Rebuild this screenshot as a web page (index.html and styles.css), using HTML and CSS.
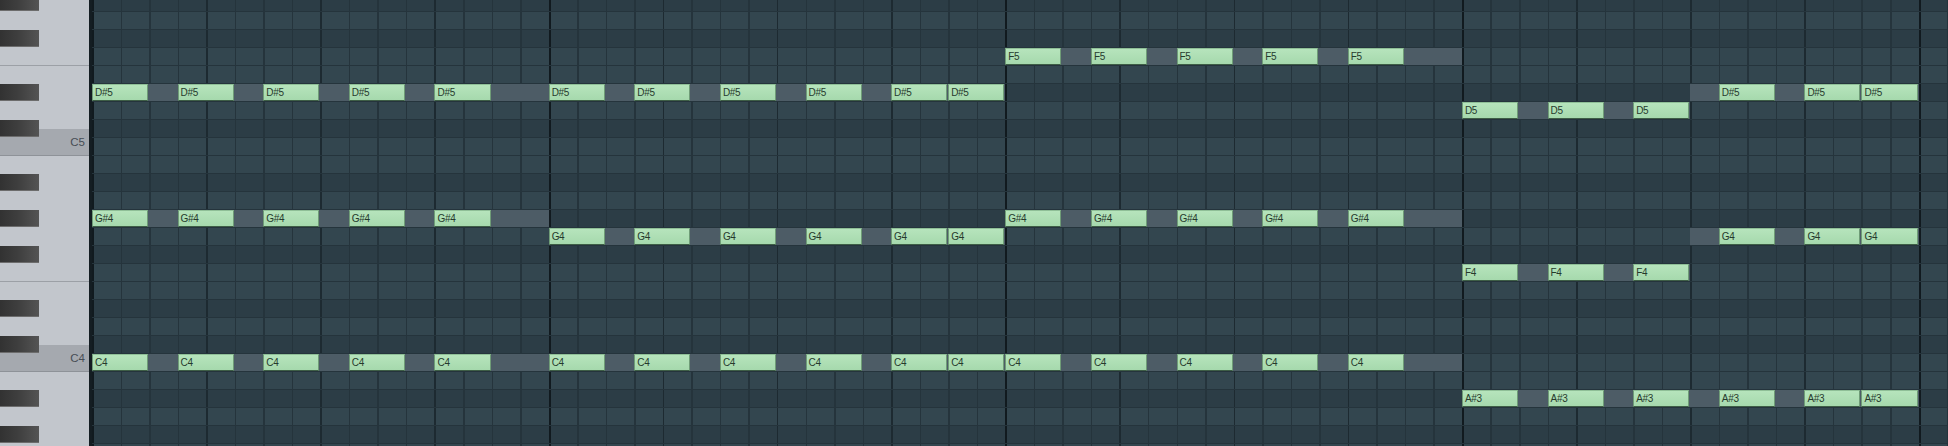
FILE: index.html
```html
<!DOCTYPE html>
<html>
<head>
<meta charset="utf-8">
<title>Piano roll</title>
<link rel="stylesheet" href="styles.css">
</head>
<body>
<div class="roll">
  <div class="piano">
    <div class="key top black"><div class="bk"></div></div>
    <div class="key white"></div>
    <div class="key black"><div class="bk"></div></div>
    <div class="key white fkey"></div>
    <div class="key white"></div>
    <div class="key black"><div class="bk"></div></div>
    <div class="key white"></div>
    <div class="key black csharp"><div class="bk"></div></div>
    <div class="key white ckey"><span class="label">C5</span></div>
    <div class="key white"></div>
    <div class="key black"><div class="bk"></div></div>
    <div class="key white"></div>
    <div class="key black"><div class="bk"></div></div>
    <div class="key white"></div>
    <div class="key black"><div class="bk"></div></div>
    <div class="key white fkey"></div>
    <div class="key white"></div>
    <div class="key black"><div class="bk"></div></div>
    <div class="key white"></div>
    <div class="key black csharp"><div class="bk"></div></div>
    <div class="key white ckey"><span class="label">C4</span></div>
    <div class="key white"></div>
    <div class="key black"><div class="bk"></div></div>
    <div class="key white"></div>
    <div class="key black"><div class="bk"></div></div>
    <div class="key white"></div>
  </div>
  <div class="divider"></div>
  <div class="grid">
    <!-- G#5 -->
    <div class="row top b"></div>
    <!-- G5 -->
    <div class="row w"></div>
    <!-- F#5 -->
    <div class="row b"></div>
    <!-- F5 -->
    <div class="row w">
      <div class="ghost" style="--s:32;--len:16"></div>
      <div class="note" style="--s:32">F5</div>
      <div class="note" style="--s:35">F5</div>
      <div class="note" style="--s:38">F5</div>
      <div class="note" style="--s:41">F5</div>
      <div class="note" style="--s:44">F5</div>
    </div>
    <!-- E5 -->
    <div class="row w"></div>
    <!-- D#5 -->
    <div class="row b">
      <div class="ghost" style="--s:0;--len:32"></div>
      <div class="ghost" style="--s:56;--len:8"></div>
      <div class="note" style="--s:0">D#5</div>
      <div class="note" style="--s:3">D#5</div>
      <div class="note" style="--s:6">D#5</div>
      <div class="note" style="--s:9">D#5</div>
      <div class="note" style="--s:12">D#5</div>
      <div class="note" style="--s:16">D#5</div>
      <div class="note" style="--s:19">D#5</div>
      <div class="note" style="--s:22">D#5</div>
      <div class="note" style="--s:25">D#5</div>
      <div class="note" style="--s:28">D#5</div>
      <div class="note" style="--s:30">D#5</div>
      <div class="note" style="--s:57">D#5</div>
      <div class="note" style="--s:60">D#5</div>
      <div class="note" style="--s:62">D#5</div>
    </div>
    <!-- D5 -->
    <div class="row w">
      <div class="ghost" style="--s:48;--len:8"></div>
      <div class="note" style="--s:48">D5</div>
      <div class="note" style="--s:51">D5</div>
      <div class="note" style="--s:54">D5</div>
    </div>
    <!-- C#5 -->
    <div class="row b"></div>
    <!-- C5 -->
    <div class="row w"></div>
    <!-- B4 -->
    <div class="row w"></div>
    <!-- A#4 -->
    <div class="row b"></div>
    <!-- A4 -->
    <div class="row w"></div>
    <!-- G#4 -->
    <div class="row b">
      <div class="ghost" style="--s:0;--len:16"></div>
      <div class="ghost" style="--s:32;--len:16"></div>
      <div class="note" style="--s:0">G#4</div>
      <div class="note" style="--s:3">G#4</div>
      <div class="note" style="--s:6">G#4</div>
      <div class="note" style="--s:9">G#4</div>
      <div class="note" style="--s:12">G#4</div>
      <div class="note" style="--s:32">G#4</div>
      <div class="note" style="--s:35">G#4</div>
      <div class="note" style="--s:38">G#4</div>
      <div class="note" style="--s:41">G#4</div>
      <div class="note" style="--s:44">G#4</div>
    </div>
    <!-- G4 -->
    <div class="row w">
      <div class="ghost" style="--s:16;--len:16"></div>
      <div class="ghost" style="--s:56;--len:8"></div>
      <div class="note" style="--s:16">G4</div>
      <div class="note" style="--s:19">G4</div>
      <div class="note" style="--s:22">G4</div>
      <div class="note" style="--s:25">G4</div>
      <div class="note" style="--s:28">G4</div>
      <div class="note" style="--s:30">G4</div>
      <div class="note" style="--s:57">G4</div>
      <div class="note" style="--s:60">G4</div>
      <div class="note" style="--s:62">G4</div>
    </div>
    <!-- F#4 -->
    <div class="row b"></div>
    <!-- F4 -->
    <div class="row w">
      <div class="ghost" style="--s:48;--len:8"></div>
      <div class="note" style="--s:48">F4</div>
      <div class="note" style="--s:51">F4</div>
      <div class="note" style="--s:54">F4</div>
    </div>
    <!-- E4 -->
    <div class="row w"></div>
    <!-- D#4 -->
    <div class="row b"></div>
    <!-- D4 -->
    <div class="row w"></div>
    <!-- C#4 -->
    <div class="row b"></div>
    <!-- C4 -->
    <div class="row w">
      <div class="ghost" style="--s:0;--len:48"></div>
      <div class="note" style="--s:0">C4</div>
      <div class="note" style="--s:3">C4</div>
      <div class="note" style="--s:6">C4</div>
      <div class="note" style="--s:9">C4</div>
      <div class="note" style="--s:12">C4</div>
      <div class="note" style="--s:16">C4</div>
      <div class="note" style="--s:19">C4</div>
      <div class="note" style="--s:22">C4</div>
      <div class="note" style="--s:25">C4</div>
      <div class="note" style="--s:28">C4</div>
      <div class="note" style="--s:30">C4</div>
      <div class="note" style="--s:32">C4</div>
      <div class="note" style="--s:35">C4</div>
      <div class="note" style="--s:38">C4</div>
      <div class="note" style="--s:41">C4</div>
      <div class="note" style="--s:44">C4</div>
    </div>
    <!-- B3 -->
    <div class="row w"></div>
    <!-- A#3 -->
    <div class="row b">
      <div class="ghost" style="--s:48;--len:16"></div>
      <div class="note" style="--s:48">A#3</div>
      <div class="note" style="--s:51">A#3</div>
      <div class="note" style="--s:54">A#3</div>
      <div class="note" style="--s:57">A#3</div>
      <div class="note" style="--s:60">A#3</div>
      <div class="note" style="--s:62">A#3</div>
    </div>
    <!-- A3 -->
    <div class="row w"></div>
    <!-- G#3 -->
    <div class="row b"></div>
    <!-- G3 -->
    <div class="row w"></div>
  </div>
</div>
</body>
</html>
```

FILE: styles.css
```css
:root {
  --step: 28.54px;
  --bar: calc(var(--step) * 16);
  --beat: calc(var(--step) * 4);
}

html, body {
  margin: 0;
  padding: 0;
  background: #2c3d46;
  overflow: hidden;
}

.roll {
  display: flex;
  width: 1948px;
  height: 446px;
  overflow: hidden;
  font-family: "Liberation Sans", Arial, sans-serif;
}

/* ---------- piano keyboard ---------- */
.piano {
  width: 89px;
  flex: none;
  display: flex;
  flex-direction: column;
  background: #c2c6cc;
}

.key {
  height: 18px;
  flex: none;
  box-sizing: border-box;
  display: flex;
  align-items: flex-start;
}

.key.top {
  height: 12px;
}

.bk {
  width: 39px;
  height: calc(100% - 1px);
  background: linear-gradient(to right, #323232 0%, #3e3e3e 45%, #545454 100%);
  box-shadow: inset 0 -1px 0 #6c6c6c;
}

.fkey {
  border-bottom: 1px solid #9ca0a6;
}

.csharp {
  background: linear-gradient(to bottom, #c2c6cc 50%, #a5a9af 50%);
}

.ckey {
  background: #a5a9af;
  border-bottom: 1px solid #8e9298;
  justify-content: flex-end;
}

.label {
  font-size: 11.5px;
  line-height: 9px;
  color: #474d55;
  padding-right: 4px;
}

.divider {
  width: 3px;
  flex: none;
  background: #141d22;
}

/* ---------- note grid ---------- */
.grid {
  flex: 1;
  display: flex;
  flex-direction: column;
  min-width: 0;
}

.row {
  position: relative;
  height: 18px;
  flex: none;
  box-sizing: border-box;
  border-bottom: 1px solid #25343c;
  background-image:
    repeating-linear-gradient(to right, #111a1f 0 2px, transparent 2px var(--bar)),
    repeating-linear-gradient(to right, #1d2a31 0 1.5px, transparent 1.5px var(--beat)),
    repeating-linear-gradient(to right, #25343c 0 1.5px, transparent 1.5px var(--step));
}

.row.top {
  height: 12px;
}

.row.w {
  background-color: #33464f;
}

.row.b {
  background-color: #2c3d46;
}

.ghost {
  position: absolute;
  top: 0;
  bottom: 0;
  left: calc(var(--s) * var(--step));
  width: calc(var(--len) * var(--step));
  background: #4d5c66;
}

.note {
  position: absolute;
  top: 0;
  height: 17px;
  left: calc(var(--s) * var(--step));
  width: calc(2 * var(--step) - 1px);
  box-sizing: border-box;
  border: 1px solid #6f9c77;
  border-bottom-color: #3e5e46;
  border-top-color: #8fbf97;
  background: linear-gradient(to bottom, #b6e4bc 0%, #a6d9ad 100%);
  padding: 1px 0 0 2px;
  font-size: 10px;
  line-height: 14px;
  letter-spacing: -0.3px;
  color: #263a2d;
  white-space: nowrap;
  overflow: hidden;
}
```
